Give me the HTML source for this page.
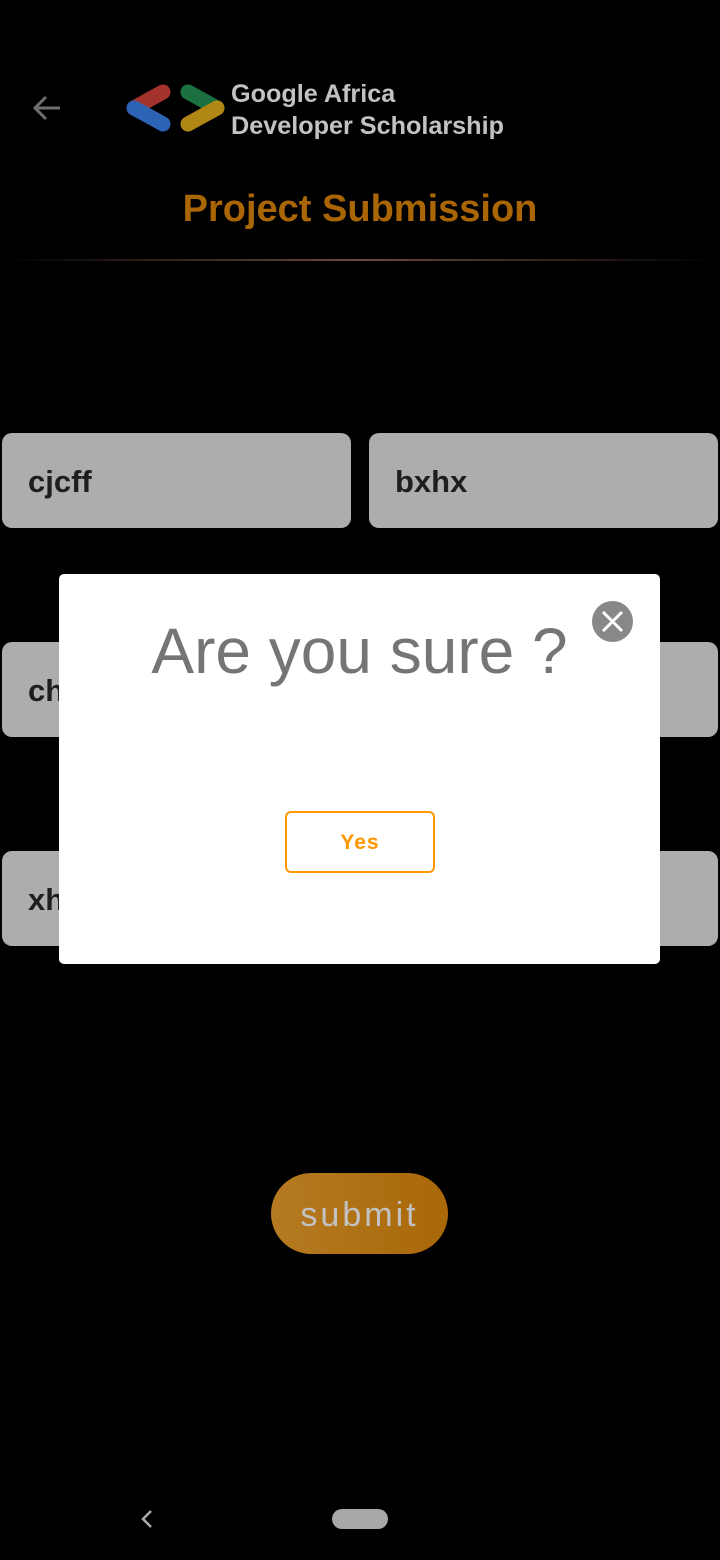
<!DOCTYPE html>
<html><head><meta charset="utf-8"><style>
body{margin:0;width:720px;height:1560px;background:#000;position:relative;overflow:hidden;font-family:"Liberation Sans",sans-serif}
.a{position:absolute}
.card{position:absolute;background:#adadad;border-radius:10px;height:95px;font-weight:bold;font-size:31px;color:#1e1e1e;line-height:97px;padding-left:26px;box-sizing:border-box}
</style></head><body>
<svg class="a" style="left:30px;top:92px" width="34" height="32" viewBox="0 0 34 32"><path d="M30 16H6M16 5L5 16l11 11" stroke="#6e6e6e" stroke-width="3" fill="none"/></svg>
<svg class="a" style="left:120px;top:80px" width="112" height="56" viewBox="0 0 112 56">
<g stroke-width="15" stroke-linecap="round">
<line x1="14" y1="28" x2="43" y2="12" stroke="#a4322c"/>
<line x1="14" y1="28" x2="43" y2="44" stroke="#2d63b5"/>
<line x1="68" y1="12" x2="97" y2="28" stroke="#1b7040"/>
<line x1="97" y1="28" x2="68" y2="44" stroke="#b08614"/>
</g></svg>
<div class="a" style="left:231px;top:78px;color:#c2c2c2;font-weight:bold;font-size:25.2px;line-height:32px">Google Africa<br>Developer Scholarship</div>
<div class="a" style="left:0;width:720px;top:188px;text-align:center;color:#aa6505;font-weight:bold;font-size:38px">Project Submission</div>
<div class="a" style="left:0;top:259px;width:720px;height:2px;background:linear-gradient(90deg,#000,#6b4a3c 50%,#000)"></div>
<div class="card" style="left:2px;top:433px;width:349px">cjcff</div>
<div class="card" style="left:369px;top:433px;width:349px">bxhx</div>
<div class="card" style="left:2px;top:642px;width:349px">ch</div>
<div class="card" style="left:369px;top:642px;width:349px"></div>
<div class="card" style="left:2px;top:851px;width:349px">xh</div>
<div class="card" style="left:369px;top:851px;width:349px"></div>
<div class="a" style="left:59px;top:574px;width:601px;height:390px;background:#fff;border-radius:5px">
<div class="a" style="left:0;width:601px;top:41px;text-align:center;font-size:64px;color:#757575;line-height:72px">Are you sure ?</div>
<div class="a" style="left:533px;top:27px;width:41px;height:41px;border-radius:50%;background:#888"><svg width="41" height="41"><path d="M11 11L30 30M30 11L11 30" stroke="#fff" stroke-width="3"/></svg></div>
<div class="a" style="left:226px;top:237px;width:146px;height:58px;border:2px solid #ff9800;border-radius:6px;text-align:center;line-height:60px;color:#ff9800;font-weight:bold;font-size:21px;letter-spacing:1px">Yes</div>
</div>
<div class="a" style="left:271px;top:1173px;width:177px;height:81px;border-radius:41px;background:linear-gradient(90deg,#b57a22,#a96808);text-align:center;line-height:84px;color:#c2c2c2;font-size:34px;letter-spacing:3px">submit</div>
<svg class="a" style="left:138px;top:1508px" width="18" height="24"><path d="M13 3L5 11l8 8" stroke="#aaa" stroke-width="2.5" fill="none"/></svg>
<div class="a" style="left:332px;top:1509px;width:56px;height:20px;border-radius:10px;background:#a8a8a8"></div>
</body></html>
